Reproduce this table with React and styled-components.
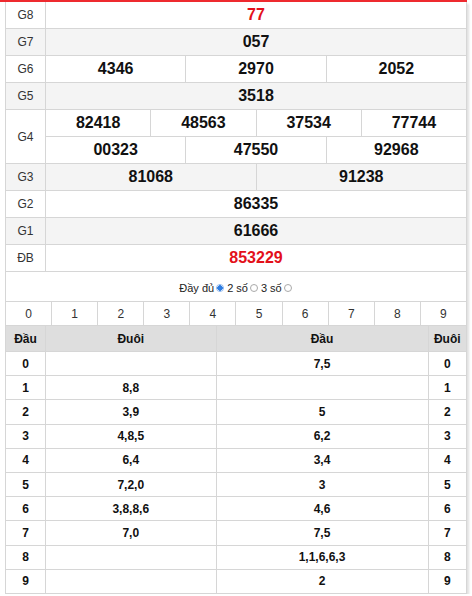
import React from "react";
import styled, { createGlobalStyle } from "styled-components";

const GlobalStyle = createGlobalStyle`
  body {
    margin: 0;
    background: #fff;
    font-family: "Liberation Sans", Arial, sans-serif;
    color: #222;
  }
`;

const LINE = "#d6d6d6";

const Frame = styled.div`
  width: 462px;
  padding-left: 5px;
  border-top: 2px solid #ee2a2f;
`;

const Panel = styled.div`
  width: 462px;
  box-sizing: border-box;
  border-left: 1px solid ${LINE};
  box-shadow: 2px 2px 2px rgba(0, 0, 0, 0.12);
`;

const PrizeRow = styled.div`
  display: grid;
  grid-template-columns: 40px 1fr;
  background: ${({ $shaded }) => ($shaded ? "#f4f4f4" : "#fff")};
`;

const Label = styled.div`
  display: flex;
  align-items: center;
  justify-content: center;
  font-size: 12px;
  color: #333;
  border-right: 1px solid ${LINE};
  border-bottom: 1px solid ${LINE};
`;

const Lines = styled.div`
  display: flex;
  flex-direction: column;
`;

const NumberLine = styled.div`
  display: grid;
  grid-template-columns: repeat(${({ $cols }) => $cols}, 1fr);
`;

const Num = styled.div`
  height: 27px;
  box-sizing: border-box;
  display: flex;
  align-items: center;
  justify-content: center;
  font-size: 16px;
  font-weight: bold;
  color: ${({ $red }) => ($red ? "#e3101a" : "#111")};
  border-right: 1px solid ${LINE};
  border-bottom: 1px solid ${LINE};
`;

const Options = styled.div`
  height: 30px;
  box-sizing: border-box;
  display: flex;
  align-items: center;
  justify-content: center;
  gap: 2px;
  font-size: 11px;
  color: #222;
  border-right: 1px solid ${LINE};
  border-bottom: 1px solid ${LINE};
  padding-top: 2px;
`;

const Radio = styled.span`
  width: 8px;
  height: 8px;
  box-sizing: border-box;
  border-radius: 50%;
  border: 1px solid ${({ $checked }) => ($checked ? "#8fb8ee" : "#a9a9a9")};
  background: ${({ $checked }) =>
    $checked ? "radial-gradient(circle, #2f7de1 0 2.6px, #fff 2.7px)" : "#fff"};
  margin-right: 1px;
`;

const DigitRow = styled.div`
  display: grid;
  grid-template-columns: repeat(10, 1fr);
  border-bottom: 1px solid ${LINE};
`;

const Digit = styled.div`
  height: 23px;
  box-sizing: border-box;
  display: flex;
  align-items: center;
  justify-content: center;
  font-size: 12px;
  color: #333;
  border-right: 1px solid ${LINE};
`;

const LotoGrid = styled.div`
  display: grid;
  grid-template-columns: 40px 170.5px 212px 1fr;
`;

const LotoCell = styled.div`
  height: ${({ $head }) => ($head ? "26px" : "24.2px")};
  box-sizing: border-box;
  display: flex;
  align-items: center;
  justify-content: center;
  font-size: 12px;
  font-weight: bold;
  color: #111;
  background: ${({ $head }) => ($head ? "#dedede" : "#fff")};
  border-right: 1px solid ${LINE};
  border-bottom: 1px solid ${LINE};
`;

const prizes = [
  { name: "G8", lines: [["77"]], red: true },
  { name: "G7", lines: [["057"]] },
  { name: "G6", lines: [["4346", "2970", "2052"]] },
  { name: "G5", lines: [["3518"]] },
  {
    name: "G4",
    lines: [
      ["82418", "48563", "37534", "77744"],
      ["00323", "47550", "92968"],
    ],
  },
  { name: "G3", lines: [["81068", "91238"]] },
  { name: "G2", lines: [["86335"]] },
  { name: "G1", lines: [["61666"]] },
  { name: "ĐB", lines: [["853229"]], red: true },
];

// [đuôi of đầu i, đầu of đuôi i]
const loto = [
  ["", "7,5"],
  ["8,8", ""],
  ["3,9", "5"],
  ["4,8,5", "6,2"],
  ["6,4", "3,4"],
  ["7,2,0", "3"],
  ["3,8,8,6", "4,6"],
  ["7,0", "7,5"],
  ["", "1,1,6,6,3"],
  ["", "2"],
];

const App = () => (
  <>
    <GlobalStyle />
    <Frame>
      <Panel>
        {prizes.map((p, i) => (
          <PrizeRow key={p.name} $shaded={i % 2 === 1}>
            <Label>{p.name}</Label>
            <Lines>
              {p.lines.map((line, j) => (
                <NumberLine key={j} $cols={line.length}>
                  {line.map((n) => (
                    <Num key={n} $red={p.red}>
                      {n}
                    </Num>
                  ))}
                </NumberLine>
              ))}
            </Lines>
          </PrizeRow>
        ))}

        <Options>
          <span>Đầy đủ</span>
          <Radio $checked />
          <span>2 số</span>
          <Radio />
          <span>3 số</span>
          <Radio />
        </Options>

        <DigitRow>
          {[0, 1, 2, 3, 4, 5, 6, 7, 8, 9].map((d) => (
            <Digit key={d}>{d}</Digit>
          ))}
        </DigitRow>

        <LotoGrid>
          <LotoCell $head>Đầu</LotoCell>
          <LotoCell $head>Đuôi</LotoCell>
          <LotoCell $head>Đầu</LotoCell>
          <LotoCell $head>Đuôi</LotoCell>
          {loto.map(([tail, head], i) => (
            <React.Fragment key={i}>
              <LotoCell>{i}</LotoCell>
              <LotoCell>{tail}</LotoCell>
              <LotoCell>{head}</LotoCell>
              <LotoCell>{i}</LotoCell>
            </React.Fragment>
          ))}
        </LotoGrid>
      </Panel>
    </Frame>
  </>
);

export default App;
